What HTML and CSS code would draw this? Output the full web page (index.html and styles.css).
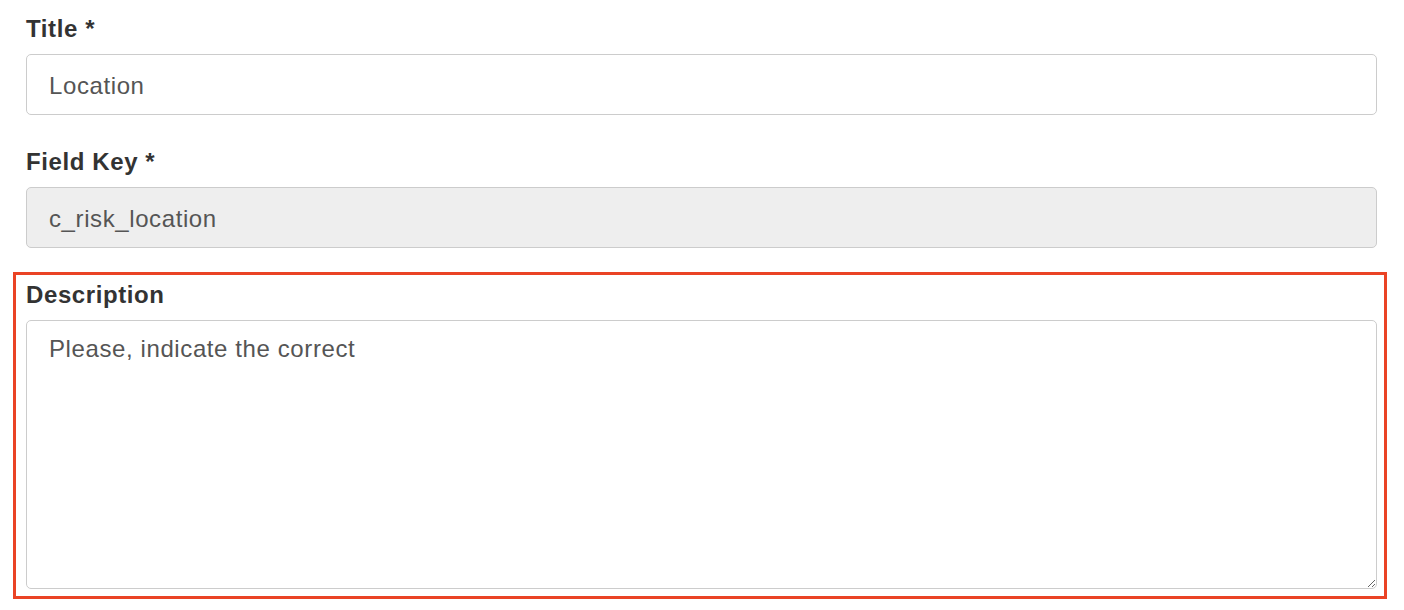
FILE: index.html
```html
<!DOCTYPE html>
<html lang="en">
<head>
<meta charset="utf-8">
<title>Field settings</title>
<link rel="stylesheet" href="styles.css">
</head>
<body>
<form class="form">
  <div class="form-group">
    <label class="label" for="title">Title *</label>
    <input class="control" id="title" type="text" value="Location">
  </div>
  <div class="form-group">
    <label class="label" for="key">Field Key *</label>
    <input class="control control-readonly" id="key" type="text" value="c_risk_location" readonly>
  </div>
  <div class="form-group highlight">
    <label class="label" for="desc">Description</label>
    <textarea class="control textarea" id="desc">Please, indicate the correct</textarea>
  </div>
</form>
</body>
</html>
```

FILE: styles.css
```css
* { box-sizing: border-box; }
html, body { margin: 0; padding: 0; background: #fff; }
body {
  font-family: "Liberation Sans", Helvetica, Arial, sans-serif;
  font-size: 24px;
  letter-spacing: 0.6px;
  color: #333;
  min-height: 610px;
}
.form {
  padding: 12px 27px 0 26px;
  display: flex;
  flex-direction: column;
  gap: 30px;
}
.form-group {
  display: flex;
  flex-direction: column;
}
.label {
  font-weight: bold;
  line-height: 33px;
  margin-bottom: 9px;
  color: #333;
}
.control {
  display: block;
  width: 100%;
  height: 61px;
  padding: 2px 22px 0;
  font-family: inherit;
  font-size: 24px;
  letter-spacing: 0.6px;
  color: #555;
  background: #fff;
  border: 1px solid #ccc;
  border-radius: 5px;
  outline: none;
  margin: 0;
}
.control-readonly {
  background: #eee;
}
.textarea {
  height: 269px;
  padding: 11px 22px;
  line-height: 33px;
  resize: vertical;
}
.highlight {
  position: relative;
}
.highlight::before {
  content: "";
  position: absolute;
  top: -6px;
  left: -13px;
  right: -10px;
  bottom: -10px;
  border: 3px solid #ea4325;
  pointer-events: none;
}
```
